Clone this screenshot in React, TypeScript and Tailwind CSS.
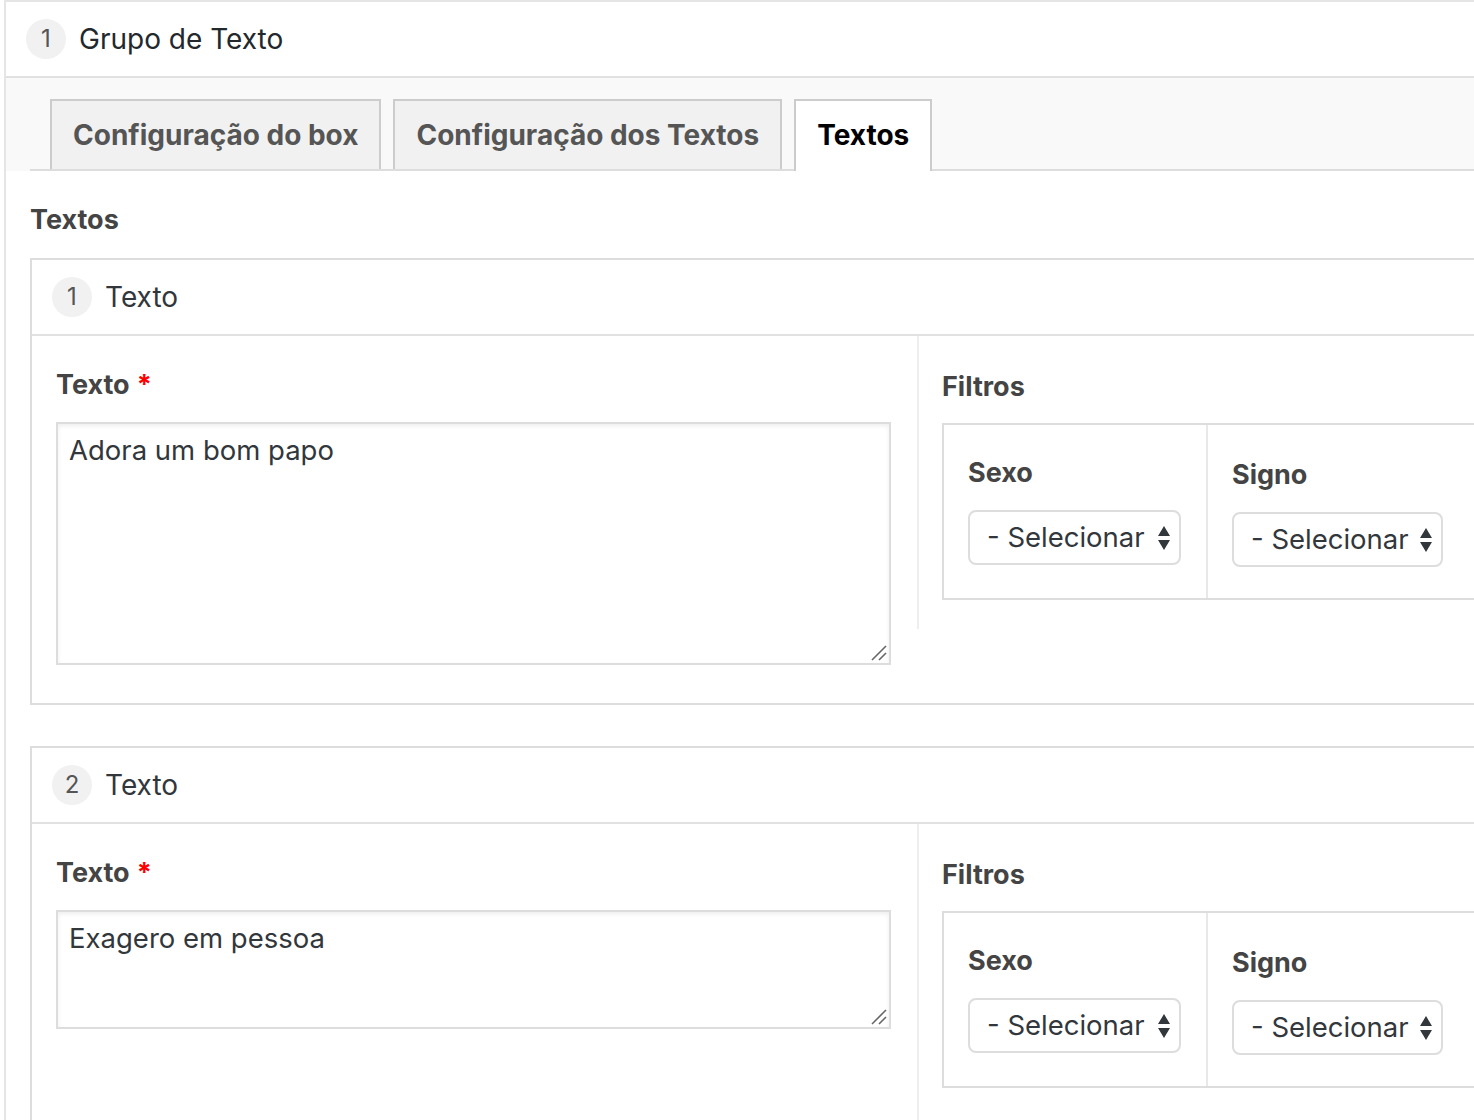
import type { ReactNode } from 'react'

const font = { fontFamily: 'Inter, "Noto Sans", sans-serif' }

function Badge({ n }: { n: number }) {
  return (
    <span className="flex h-[40px] w-[40px] shrink-0 items-center justify-center rounded-full bg-[#f1f1f1] text-[24px] text-[#555]">
      {n}
    </span>
  )
}

function SelectArrows() {
  return (
    <svg width="12" height="24" viewBox="0 0 12 24" className="shrink-0">
      <path d="M6 0 L12 10 L0 10 Z" fill="#32373c" />
      <path d="M0 14 L12 14 L6 24 Z" fill="#32373c" />
    </svg>
  )
}

function ResizeGrip() {
  return (
    <svg width="18" height="18" viewBox="0 0 18 18" className="pointer-events-none absolute bottom-[3px] right-[3px]">
      <path d="M2 16 L16 2" stroke="#666" strokeWidth="1.6" />
      <path d="M9 16 L16 9" stroke="#666" strokeWidth="1.6" />
    </svg>
  )
}

function FakeSelect({ w }: { w: string }) {
  return (
    <div
      className={`flex h-[55px] ${w} items-center justify-between rounded-[8px] border-2 border-[#dddddd] bg-white pl-[17px] pr-[9px] text-[27.5px] text-[#32373c]`}
    >
      <span>- Selecionar</span>
      <SelectArrows />
    </div>
  )
}

function Label({ children, required }: { children: ReactNode; required?: boolean }) {
  return (
    <div className="h-[36px] text-[27px] font-bold leading-[36px] text-[#444]">
      {children}
      {required && <span className="ml-[7px] text-[#ff0000]">*</span>}
    </div>
  )
}

function Filters() {
  return (
    <div className="flex w-[600px] border-2 border-[#dddddd]">
      <div className="w-[264px] shrink-0 border-r-2 border-[#e8e8e8] px-[24px] pb-[33px] pt-[30px]">
        <Label>Sexo</Label>
        <div className="mt-[19px]">
          <FakeSelect w="w-[213px]" />
        </div>
      </div>
      <div className="pl-[24px] pb-[31px] pt-[32px]">
        <Label>Signo</Label>
        <div className="mt-[19px]">
          <FakeSelect w="w-[211px]" />
        </div>
      </div>
    </div>
  )
}

function TextItem({
  n,
  text,
  h,
  mt,
  pb,
}: {
  n: number
  text: string
  h: string
  mt?: string
  pb: string
}) {
  return (
    <div className={`${mt ?? ''} border-2 border-[#dddddd]`}>
      <div className="flex h-[76px] items-center gap-[13px] border-b-2 border-[#e1e1e1] pl-[20px]">
        <Badge n={n} />
        <span className="text-[28px] text-[#32373c]">Texto</span>
      </div>
      <div className="flex items-start">
        <div className="w-[885px] shrink-0 pb-[38px] pl-[24px] pr-[26px] pt-[31px]">
          <Label required>Texto</Label>
          <div className="relative mt-[19px] w-[835px]">
            <textarea
              defaultValue={text}
              className={`block ${h} w-full resize-none border-2 border-[#dddddd] px-[11px] py-[7px] text-[27.5px] leading-[38px] text-[#32373c] shadow-[inset_0_2px_4px_rgba(0,0,0,0.07)] outline-none`}
              style={font}
            />
            <ResizeGrip />
          </div>
        </div>
        <div className={`border-l-2 border-[#eeeeee] ${pb} pl-[23px] pt-[33px]`}>
          <Label>Filtros</Label>
          <div className="mt-[18px]">
            <Filters />
          </div>
        </div>
      </div>
    </div>
  )
}

export default function App() {
  return (
    <div className="h-[1120px] w-[1474px] overflow-hidden bg-white" style={font}>
      <div className="ml-[4px] w-[1560px] border-l-2 border-t-2 border-[#e5e5e5]">
        <div className="flex h-[76px] items-center gap-[13px] border-b-2 border-[#e1e1e1] pl-[20px]">
          <Badge n={1} />
          <span className="text-[28px] text-[#23282d]">Grupo de Texto</span>
        </div>

        <div className="bg-[#f9f9f9] pl-[24px] pt-[21px]">
          <div className="flex items-end gap-[12px] border-b-2 border-[#dddddd] pl-[20px]">
            <div className="flex h-[70px] items-center border-x-2 border-t-2 border-[#cccccc] bg-[#f1f1f1] px-[21px] text-[28px] font-bold text-[#555]">
              Configuração do box
            </div>
            <div className="flex h-[70px] items-center border-x-2 border-t-2 border-[#cccccc] bg-[#f1f1f1] px-[21px] text-[28px] font-bold text-[#555]">
              Configuração dos Textos
            </div>
            <div className="-mb-[2px] flex h-[72px] items-center border-x-2 border-t-2 border-[#cccccc] bg-white px-[21px] pb-[2px] text-[28px] font-bold text-[#000]">
              Textos
            </div>
          </div>
        </div>

        <div className="pl-[24px] pt-[31px]">
          <Label>Textos</Label>
          <div className="mt-[20px]">
            <TextItem n={1} text="Adora um bom papo" h="h-[243px]" pb="pb-[29px]" />
            <TextItem n={2} text="Exagero em pessoa" h="h-[119px]" mt="mt-[41px]" pb="pb-[40px]" />
          </div>
        </div>
      </div>
    </div>
  )
}
